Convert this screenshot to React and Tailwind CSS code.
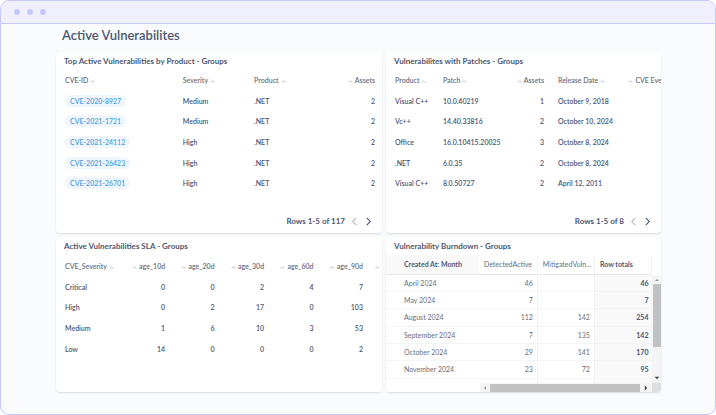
import React from "react";

const productCves = [
  ["CVE-2020-8927", "Medium", ".NET", 2],
  ["CVE-2021-1721", "Medium", ".NET", 2],
  ["CVE-2021-24112", "High", ".NET", 2],
  ["CVE-2021-26423", "High", ".NET", 2],
  ["CVE-2021-26701", "High", ".NET", 2],
];

const patches = [
  ["Visual C++", "10.0.40219", 1, "October 9, 2018"],
  ["Vc++", "14.40.33816", 2, "October 10, 2024"],
  ["Office", "16.0.10415.20025", 3, "October 8, 2024"],
  [".NET", "6.0.35", 2, "October 8, 2024"],
  ["Visual C++", "8.0.50727", 2, "April 12, 2011"],
];

const slaColumns = ["age_10d", "age_20d", "age_30d", "age_60d", "age_90d"];

const sla = [
  ["Critical", 0, 0, 2, 4, 7],
  ["High", 0, 2, 17, 0, 103],
  ["Medium", 1, 6, 10, 3, 53],
  ["Low", 14, 0, 0, 0, 2],
];

const burndown = [
  ["April 2024", 46, "", 46],
  ["May 2024", 7, "", 7],
  ["August 2024", 112, 142, 254],
  ["September 2024", 7, 135, 142],
  ["October 2024", 29, 141, 170],
  ["November 2024", 23, 72, 95],
];

const Caret = () => (
  <svg viewBox="0 0 5 3" className="inline-block w-[5px] h-[3px] mx-[2px] align-middle" fill="none" stroke="#b0b4bf" strokeWidth="0.8">
    <path d="M0.5 2.2 L2.5 1 L4.5 2.2" />
  </svg>
);

const Chevron = ({ right }) => (
  <svg viewBox="0 0 5 9" className="w-[5px] h-[9px]" fill="none" stroke={right ? "#4c5773" : "#b4b9c4"} strokeWidth="1.1">
    <path d={right ? "M0.8 0.8 L4.3 4.5 L0.8 8.2" : "M4.2 0.8 L0.7 4.5 L4.2 8.2"} />
  </svg>
);

const Card = ({ title, children }) => (
  <section className="flex flex-col min-w-0 overflow-hidden rounded-[4px] bg-white shadow-[0_1px_2px_rgba(60,70,100,0.16)]">
    <h2 className="pl-2 pt-[3px] h-[18px] shrink-0 text-[8px] leading-[12px] font-bold">{title}</h2>
    {children}
  </section>
);

const Pager = ({ text }) => (
  <div className="mt-auto flex items-center justify-end pr-[11px] pb-[6px] text-[8px] leading-[12px] font-bold">
    <span>{text}</span>
    <button aria-label="Previous page" className="ml-[7px]"><Chevron /></button>
    <button aria-label="Next page" className="ml-[9px]"><Chevron right /></button>
  </div>
);

const head = "p-0 text-left font-semibold text-[#696e7b]";
const headRight = "p-0 text-right font-semibold text-[#696e7b]";
const rows = "[&>tr]:h-[21px] [&>tr:nth-child(3n+2)]:h-5";

const ByProduct = () => (
  <Card title="Top Active Vulnerabilities by Product - Groups">
    <div className="pl-[9px] pr-[7px]">
      <table className="w-full table-fixed whitespace-nowrap text-[7px] leading-[10px] font-semibold">
        <thead>
          <tr className="h-5">
            <th className={`${head} w-[38%]`}>CVE-ID<Caret /></th>
            <th className={`${head} w-[23%]`}>Severity<Caret /></th>
            <th className={head}>Product<Caret /></th>
            <th className={headRight}><Caret />Assets</th>
          </tr>
        </thead>
        <tbody className={rows}>
          {productCves.map(([id, severity, product, assets]) => (
            <tr key={id}>
              <td className="p-0">
                <a href="#cve" className="inline-block rounded-full bg-[#eff6fd] px-[5px] py-px text-[#509ee3]">{id}</a>
              </td>
              <td className="p-0">{severity}</td>
              <td className="p-0">{product}</td>
              <td className="p-0 text-right">{assets}</td>
            </tr>
          ))}
        </tbody>
      </table>
    </div>
    <Pager text="Rows 1-5 of 117" />
  </Card>
);

const WithPatches = () => (
  <Card title="Vulnerabilites with Patches - Groups">
    <div className="pl-[9px] overflow-hidden">
      <table className="w-full table-fixed whitespace-nowrap text-[7px] leading-[10px] font-semibold">
        <thead>
          <tr className="h-5">
            <th className={`${head} w-[18%]`}>Product<Caret /></th>
            <th className={`${head} w-[22%]`}>Patch<Caret /></th>
            <th className={`${headRight} w-[16%]`}><Caret />Assets</th>
            <th className={`${head} w-[31%]`}><span className="pl-[14px]">Release Date</span><Caret /></th>
            <th className={headRight}><Caret />CVE Eve</th>
          </tr>
        </thead>
        <tbody className={rows}>
          {patches.map(([product, patch, assets, date]) => (
            <tr key={patch}>
              <td className="p-0">{product}</td>
              <td className="p-0">{patch}</td>
              <td className="p-0 text-right">{assets}</td>
              <td className="p-0 pl-[14px]">{date}</td>
              <td className="p-0" />
            </tr>
          ))}
        </tbody>
      </table>
    </div>
    <Pager text="Rows 1-5 of 8" />
  </Card>
);

const Sla = () => (
  <Card title="Active Vulnerabilities SLA - Groups">
    <div className="pl-[9px] pt-px">
      <table className="w-full table-fixed whitespace-nowrap text-[7px] leading-[10px] font-semibold">
        <thead>
          <tr className="h-5">
            <th className={`${head} w-[16%]`}>CVE_Severity<Caret /></th>
            {slaColumns.map((name) => (
              <th key={name} className={headRight}><Caret />{name}</th>
            ))}
            <th className={`${headRight} w-[6%]`}><Caret /></th>
          </tr>
        </thead>
        <tbody className={rows}>
          {sla.map(([name, ...counts]) => (
            <tr key={name}>
              <td className="p-0">{name}</td>
              {counts.map((count, i) => (
                <td key={i} className="p-0 text-right">{count}</td>
              ))}
              <td className="p-0" />
            </tr>
          ))}
        </tbody>
      </table>
    </div>
  </Card>
);

const Arrow = ({ d, dark }) => (
  <svg viewBox="0 0 6 6" className="w-[6px] h-[6px]" fill={dark ? "#404040" : "#9a9a9a"}>
    <path d={d} />
  </svg>
);

const Burndown = () => (
  <Card title="Vulnerability Burndown - Groups">
    <div className="flex h-32">
      <div className="flex-1 min-w-0 overflow-hidden">
        <table className="w-full table-fixed border-collapse whitespace-nowrap text-[7px] leading-[10px] text-[#696e7b]">
          <thead>
            <tr className="h-[19px] border-b border-[#e6e8ea]">
              <th className="w-[35%] bg-[#f9f9fa] p-0 pl-[18px] text-left font-bold text-[#4c5773]">Created At: Month</th>
              <th className="w-[22%] border-r border-[#f0f1f2] p-0 pl-[5px] text-left font-normal">DetectedActive</th>
              <th className="border-r border-[#f0f1f2] p-0 pl-[5px] text-left font-normal">MitigatedVuln...</th>
              <th className="border-r border-[#f0f1f2] p-0 pl-[5px] text-left font-bold text-[#4c5773]">Row totals</th>
            </tr>
          </thead>
          <tbody>
            {burndown.map(([month, detected, mitigated, total], i) => (
              <tr key={month} className={`${i % 3 === 2 ? "h-[18px]" : "h-[17px]"} border-b border-[#f3f4f5]`}>
                <td className="p-0 pl-[18px]">{month}</td>
                <td className="border-r border-[#f0f1f2] p-0 pr-1 text-right">{detected}</td>
                <td className="border-r border-[#f0f1f2] p-0 pr-1 text-right">{mitigated}</td>
                <td className="bg-[#f9f9fa] p-0 pr-[3px] text-right font-bold text-[#4c5773]">{total}</td>
              </tr>
            ))}
            <tr className="h-[17px]">
              <td />
              <td className="border-r border-[#f0f1f2]" />
              <td className="border-r border-[#f0f1f2]" />
              <td className="bg-[#f9f9fa]" />
            </tr>
          </tbody>
        </table>
      </div>
      <div className="mt-5 flex w-[9px] flex-col items-center bg-[#f4f4f4]">
        <button aria-label="Scroll up" className="flex h-[9px] items-center"><Arrow d="M1 4 L3 2 L5 4Z" /></button>
        <div className="h-[63px] w-2 bg-[#c1c1c1]" />
        <button aria-label="Scroll down" className="mt-auto flex h-[10px] items-center"><Arrow dark d="M0.6 1.8 L3 4.2 L5.4 1.8Z" /></button>
      </div>
    </div>
    <div className="flex h-[9px]">
      <div className="w-[94px] shrink-0" />
      <div className="flex flex-1 items-center bg-[#f4f4f4]">
        <button aria-label="Scroll left" className="flex w-[10px] justify-center"><Arrow d="M4 1 L2 3 L4 5Z" /></button>
        <div className="h-2 flex-1 bg-[#c1c1c1]" />
        <button aria-label="Scroll right" className="flex w-3 justify-center"><Arrow dark d="M1.8 0.6 L4.2 3 L1.8 5.4Z" /></button>
      </div>
      <div className="w-[9px] bg-[#dcdcdc]" />
    </div>
  </Card>
);

export default function App() {
  return (
    <div className="min-h-screen flex flex-col overflow-hidden rounded-[9px] border border-[#c6c7fa] bg-[#fafbfd] font-['Lato',sans-serif] text-[#4c5773]">
      <header className="flex h-[23px] items-center gap-[7px] border-b border-[#c6c7fa] bg-[#f0effe] pl-[13px]">
        <span className="size-[6px] rounded-full bg-[#c6c7fa]" />
        <span className="size-[6px] rounded-full bg-[#c6c7fa]" />
        <span className="size-[6px] rounded-full bg-[#c6c7fa]" />
      </header>
      <main className="pl-[55px] pr-[54px]">
        <h1 className="pl-[6px] pt-[3px] h-7 text-[13px] leading-4 font-semibold">Active Vulnerabilites</h1>
        <div className="grid grid-cols-[326fr_275fr] grid-rows-[181px_155px] gap-1">
          <ByProduct />
          <WithPatches />
          <Sla />
          <Burndown />
        </div>
      </main>
    </div>
  );
}
